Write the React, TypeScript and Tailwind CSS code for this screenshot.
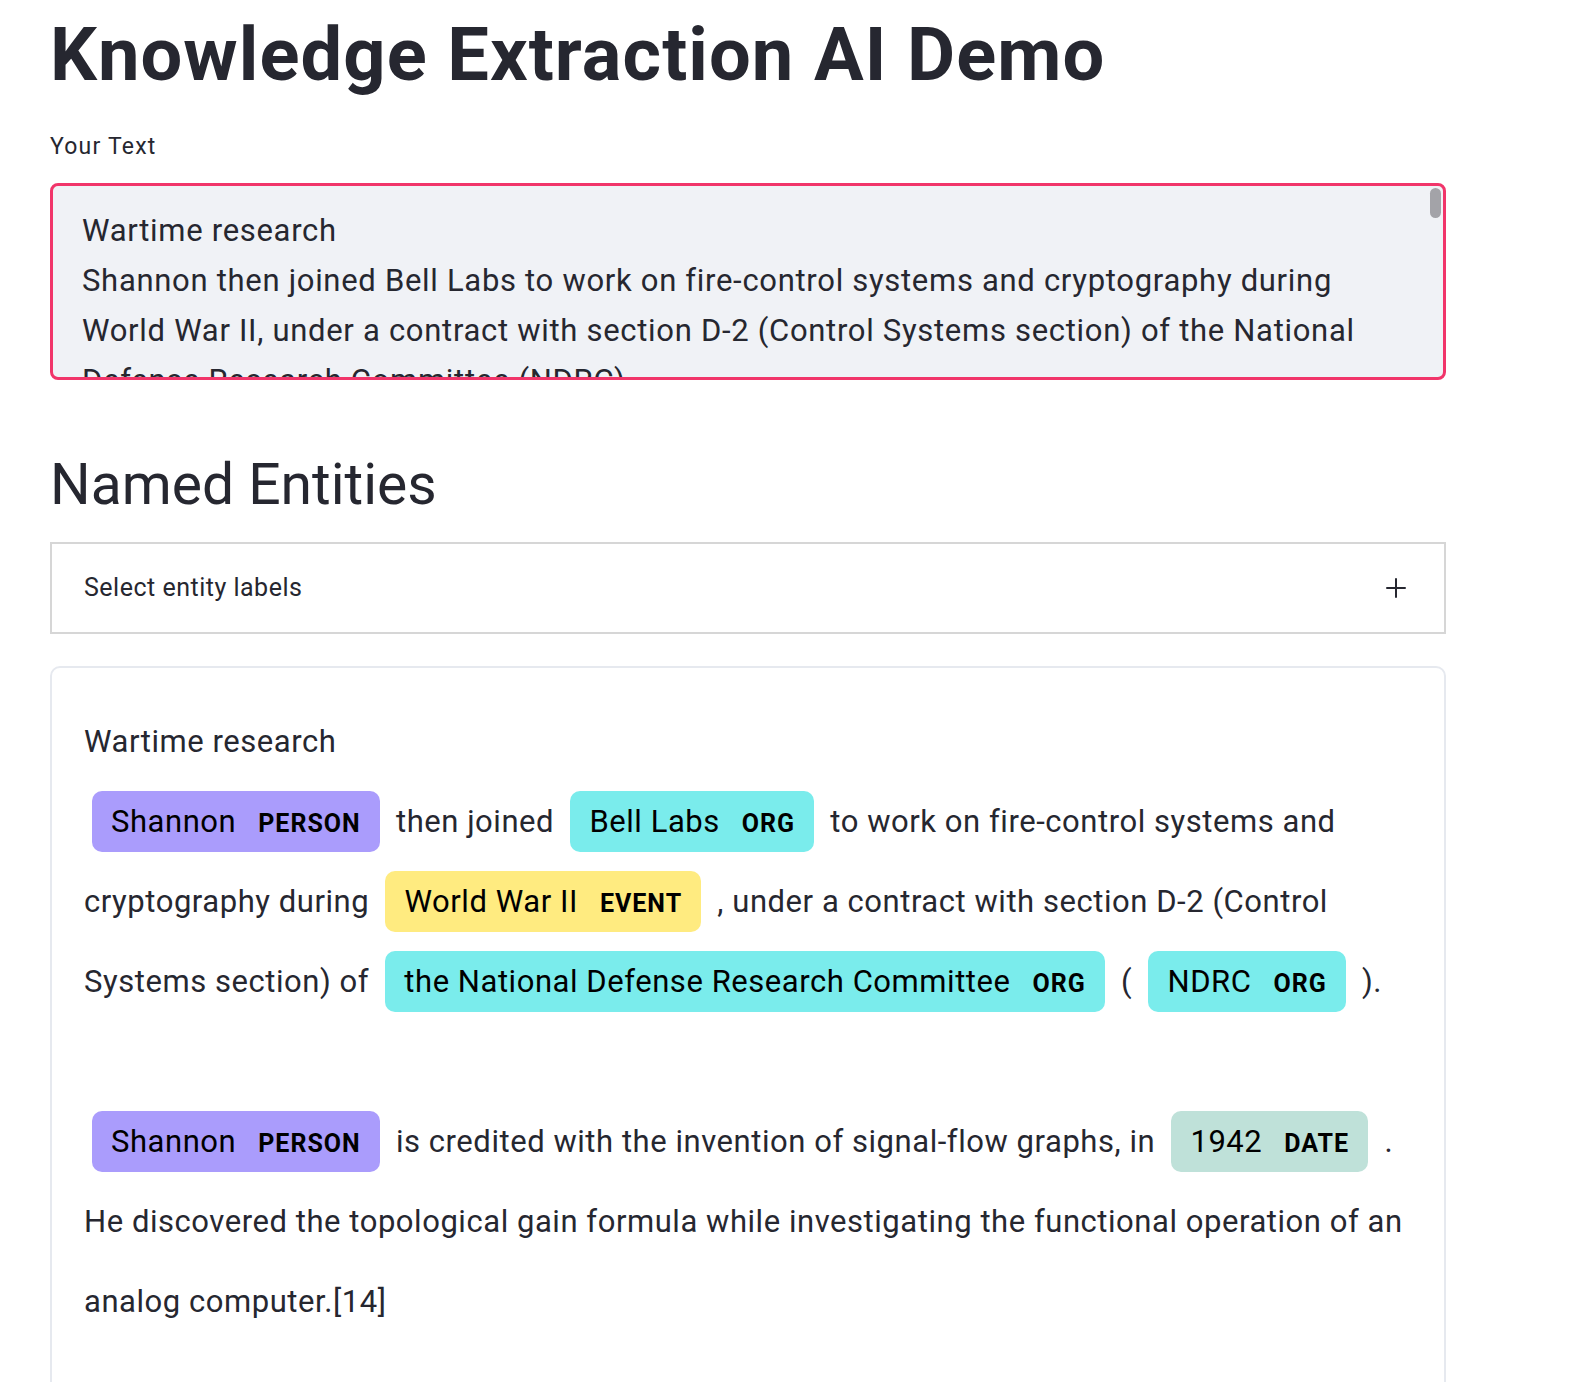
import React from "react";

type Ent = { text: string; label: string; color: string };

function Mark({ text, label, color }: Ent) {
  return (
    <mark
      className={`inline-block rounded-[10px] px-[19px] py-[15px] mx-[8px] leading-none text-black ${color}`}
    >
      {text}
      <span className="ml-[22px] align-middle text-[25px] font-bold leading-none tracking-[1px]">
        {label}
      </span>
    </mark>
  );
}

const PERSON = "bg-[#aa9cfc]";
const ORG = "bg-[#7aecec]";
const EVENT = "bg-[#ffeb80]";
const DATE = "bg-[#bfe1d9]";

export default function App() {
  return (
    <div className="h-[1382px] overflow-hidden bg-white text-[#262730] font-['Roboto','Liberation_Sans',sans-serif]">
      <div className="ml-[50px] w-[1396px] pt-[11px]">
        <h1 className="text-[74px] leading-[1.2] font-bold tracking-[1.1px] text-[#262730]">
          Knowledge Extraction AI Demo
        </h1>

        <label className="block mt-[30px] text-[23px] leading-[1.5] tracking-[1.2px]">
          Your Text
        </label>

        {/* text area */}
        <div className="relative mt-[19px] h-[197px] overflow-hidden rounded-[8px] border-[3px] border-[#f1356a] bg-[#f0f2f6] pl-[29px] pt-[20px] text-[31px] leading-[50px] tracking-[0.7px]">
          <div className="whitespace-nowrap">Wartime research</div>
          <div className="whitespace-nowrap">
            Shannon then joined Bell Labs to work on fire-control systems and cryptography during
          </div>
          <div className="whitespace-nowrap">
            World War II, under a contract with section D-2 (Control Systems section) of the National
          </div>
          <div className="whitespace-nowrap">Defense Research Committee (NDRC).</div>
          <div className="absolute right-[2px] top-[2px] h-[30px] w-[11px] rounded-full bg-[#a3a3a8]" />
        </div>

        <h2 className="mt-[71px] text-[57px] leading-[1.2] font-normal">Named Entities</h2>

        {/* select */}
        <div className="mt-[22px] flex h-[92px] items-center justify-between border-2 border-[#d6d6d6] pl-[32px] pr-[36px]">
          <span className="text-[25px] tracking-[0.5px]">Select entity labels</span>
          <svg
            className="w-[24px] h-[24px] text-[#262730]"
            viewBox="0 0 24 24"
            fill="none"
            stroke="currentColor"
            strokeWidth={2}
            strokeLinecap="round"
          >
            <path d="M12 3v18M3 12h18" />
          </svg>
        </div>

        {/* entities card */}
        <div className="mt-[32px] rounded-[10px] border-2 border-[#e6e9ef] px-[32px] pt-[34px] pb-[80px] text-[31px] leading-[80px] tracking-[0.55px]">
          <div className="whitespace-nowrap">Wartime research</div>
          <div className="whitespace-nowrap">
            <Mark text="Shannon" label="PERSON" color={PERSON} /> then joined{" "}
            <Mark text="Bell Labs" label="ORG" color={ORG} /> to work on fire-control systems and
          </div>
          <div className="whitespace-nowrap">
            cryptography during <Mark text="World War II" label="EVENT" color={EVENT} /> , under a
            contract with section D-2 (Control
          </div>
          <div className="whitespace-nowrap">
            Systems section) of{" "}
            <Mark text="the National Defense Research Committee" label="ORG" color={ORG} /> ({" "}
            <Mark text="NDRC" label="ORG" color={ORG} /> ).
          </div>
          <div className="h-[80px]" />
          <div className="whitespace-nowrap">
            <Mark text="Shannon" label="PERSON" color={PERSON} /> is credited with the invention of
            signal-flow graphs, in <Mark text="1942" label="DATE" color={DATE} /> .
          </div>
          <div className="whitespace-nowrap">
            He discovered the topological gain formula while investigating the functional operation of
            an
          </div>
          <div className="whitespace-nowrap">analog computer.[14]</div>
        </div>
      </div>
    </div>
  );
}
